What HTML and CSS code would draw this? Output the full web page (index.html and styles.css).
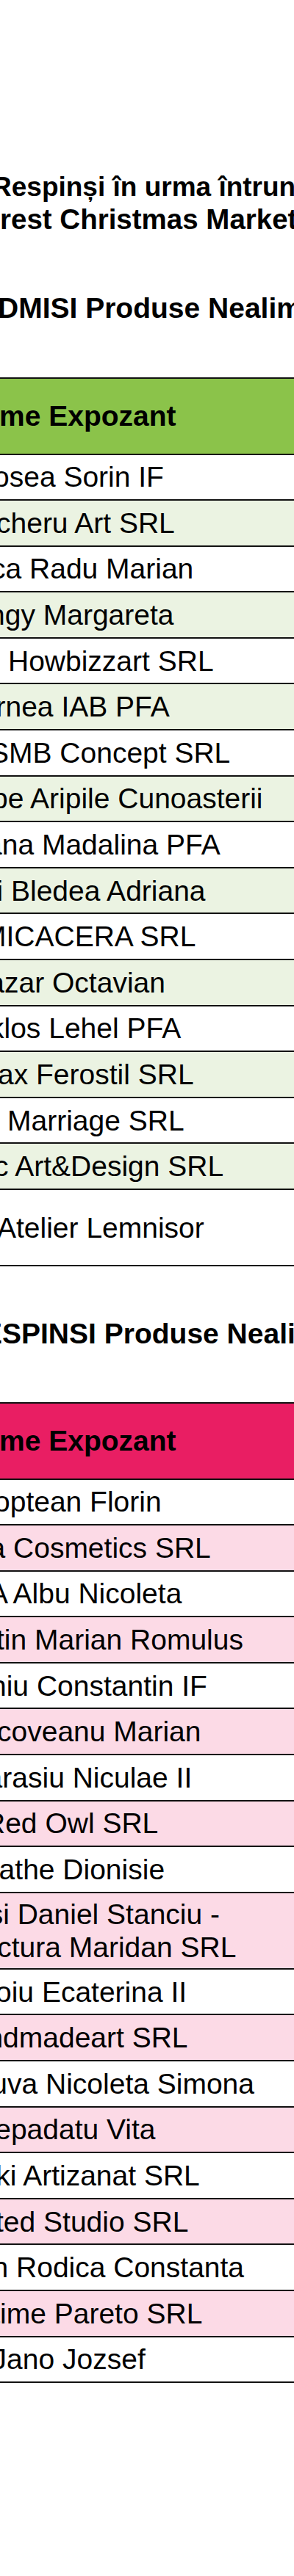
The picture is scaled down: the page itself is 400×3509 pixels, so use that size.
FILE: index.html
```html
<!DOCTYPE html>
<html lang="ro">
<head>
<meta charset="utf-8">
<title>Bucharest Christmas Market</title>
<link rel="stylesheet" href="styles.css">
</head>
<body>
<main class="page">
  <h1 class="title">
    <span class="t1">Respinși în urma întrunirii</span>
    <span class="t2">rest Christmas Market</span>
  </h1>

  <section class="sec green">
    <h2 class="sec-title" style="--x:-3px">DMISI Produse Nealimentare</h2>
    <div class="tbl">
      <div class="row head"><span style="--x:-1px">me Expozant</span></div>
      <div class="row"><span style="--x:-9px">osea Sorin IF</span></div>
      <div class="row"><span style="--x:-5px">cheru Art SRL</span></div>
      <div class="row"><span style="--x:-12px">ca Radu Marian</span></div>
      <div class="row"><span style="--x:-15px">ngy Margareta</span></div>
      <div class="row"><span style="--x:11px">Howbizzart SRL</span></div>
      <div class="row"><span style="--x:-5.5px">rnea IAB PFA</span></div>
      <div class="row"><span style="--x:-14px">SMB Concept SRL</span></div>
      <div class="row"><span style="--x:-11px">pe Aripile Cunoasterii</span></div>
      <div class="row"><span style="--x:-19px">ana Madalina PFA</span></div>
      <div class="row"><span style="--x:-4.5px">i Bledea Adriana</span></div>
      <div class="row"><span style="--x:-24px">MICACERA SRL</span></div>
      <div class="row"><span style="--x:-15.7px">azar Octavian</span></div>
      <div class="row"><span style="--x:-14px">klos Lehel PFA</span></div>
      <div class="row"><span style="--x:-3px">ax Ferostil SRL</span></div>
      <div class="row"><span style="--x:10px">Marriage SRL</span></div>
      <div class="row"><span style="--x:-8px">c Art&amp;Design SRL</span></div>
      <div class="row tall"><span style="--x:-4px">Atelier Lemnisor</span></div>
    </div>
  </section>

  <section class="sec pink">
    <h2 class="sec-title" style="--x:-23px">ESPINSI Produse Nealimentare</h2>
    <div class="tbl">
      <div class="row head"><span style="--x:-1px">me Expozant</span></div>
      <div class="row"><span style="--x:-8px">optean Florin</span></div>
      <div class="row"><span style="--x:-14.5px">a Cosmetics SRL</span></div>
      <div class="row"><span style="--x:-15px">A Albu Nicoleta</span></div>
      <div class="row"><span style="--x:-5px">tin Marian Romulus</span></div>
      <div class="row"><span style="--x:-13px">niu Constantin IF</span></div>
      <div class="row"><span style="--x:-4px">coveanu Marian</span></div>
      <div class="row"><span style="--x:-18.4px">arasiu Niculae II</span></div>
      <div class="row"><span style="--x:-21px">Red Owl SRL</span></div>
      <div class="row"><span style="--x:-1.4px">athe Dionisie</span></div>
      <div class="row tall"><div class="lines"><span style="--x:-15.3px">si Daniel Stanciu -</span><span style="--x:-3.8px">ctura Maridan SRL</span></div></div>
      <div class="row"><span style="--x:-6px">oiu Ecaterina II</span></div>
      <div class="row"><span style="--x:-17.6px">ndmadeart SRL</span></div>
      <div class="row"><span style="--x:-11.7px">uva Nicoleta Simona</span></div>
      <div class="row"><span style="--x:-6.8px">epadatu Vita</span></div>
      <div class="row"><span style="--x:-5.7px">ki Artizanat SRL</span></div>
      <div class="row"><span style="--x:-6px">ted Studio SRL</span></div>
      <div class="row"><span style="--x:-10.5px">n Rodica Constanta</span></div>
      <div class="row"><span style="--x:-10.8px">time Pareto SRL</span></div>
      <div class="row"><span style="--x:-10.4px">Jano Jozsef</span></div>
    </div>
  </section>
</main>
</body>
</html>
```

FILE: styles.css
```css
* {
  box-sizing: border-box;
  margin: 0;
  padding: 0;
}

html, body {
  margin: 0;
  background: #ffffff;
}

body {
  width: 400px;
  height: 3509px;
  overflow: hidden;
  font-family: "Liberation Sans", Arial, Helvetica, sans-serif;
  color: #000000;
}

.page {
  width: 400px;
  padding-top: 233px;
  white-space: nowrap;
  overflow: hidden;
}

.title {
  font-weight: 700;
}

.t1 {
  display: block;
  font-size: 37px;
  line-height: 43px;
  margin-left: -11px;
}

.t2 {
  display: block;
  font-size: 38.5px;
  line-height: 45px;
  margin-left: 0;
}

.sec-title {
  font-size: 39px;
  line-height: 45px;
  font-weight: 700;
  margin-left: var(--x, 0);
}

.green .sec-title {
  margin-top: 76px;
}

.pink .sec-title {
  margin-top: 69px;
}

.green .tbl {
  margin-top: 72px;
}

.pink .tbl {
  margin-top: 71px;
}

.tbl {
  width: 400px;
  border-bottom: 2px solid #111111;
}

.row {
  display: flex;
  align-items: center;
  height: 62.6px;
  border-top: 2px solid #111111;
  font-size: 39px;
  line-height: 45px;
  overflow: hidden;
}

.row > span,
.lines > span {
  display: block;
  margin-left: var(--x, 0);
}

.lines {
  display: flex;
  flex-direction: column;
}

.row.head {
  height: 103.5px;
  font-weight: 700;
}

.row.tall {
  height: 104px;
}

.green .row.head {
  background: #8bc34a;
}

.green .row:nth-child(odd):not(.head) {
  background: #ebf3e2;
}

.pink .row.head {
  background: #e91e63;
}

.pink .row:nth-child(odd):not(.head) {
  background: #fcdae6;
}
```
